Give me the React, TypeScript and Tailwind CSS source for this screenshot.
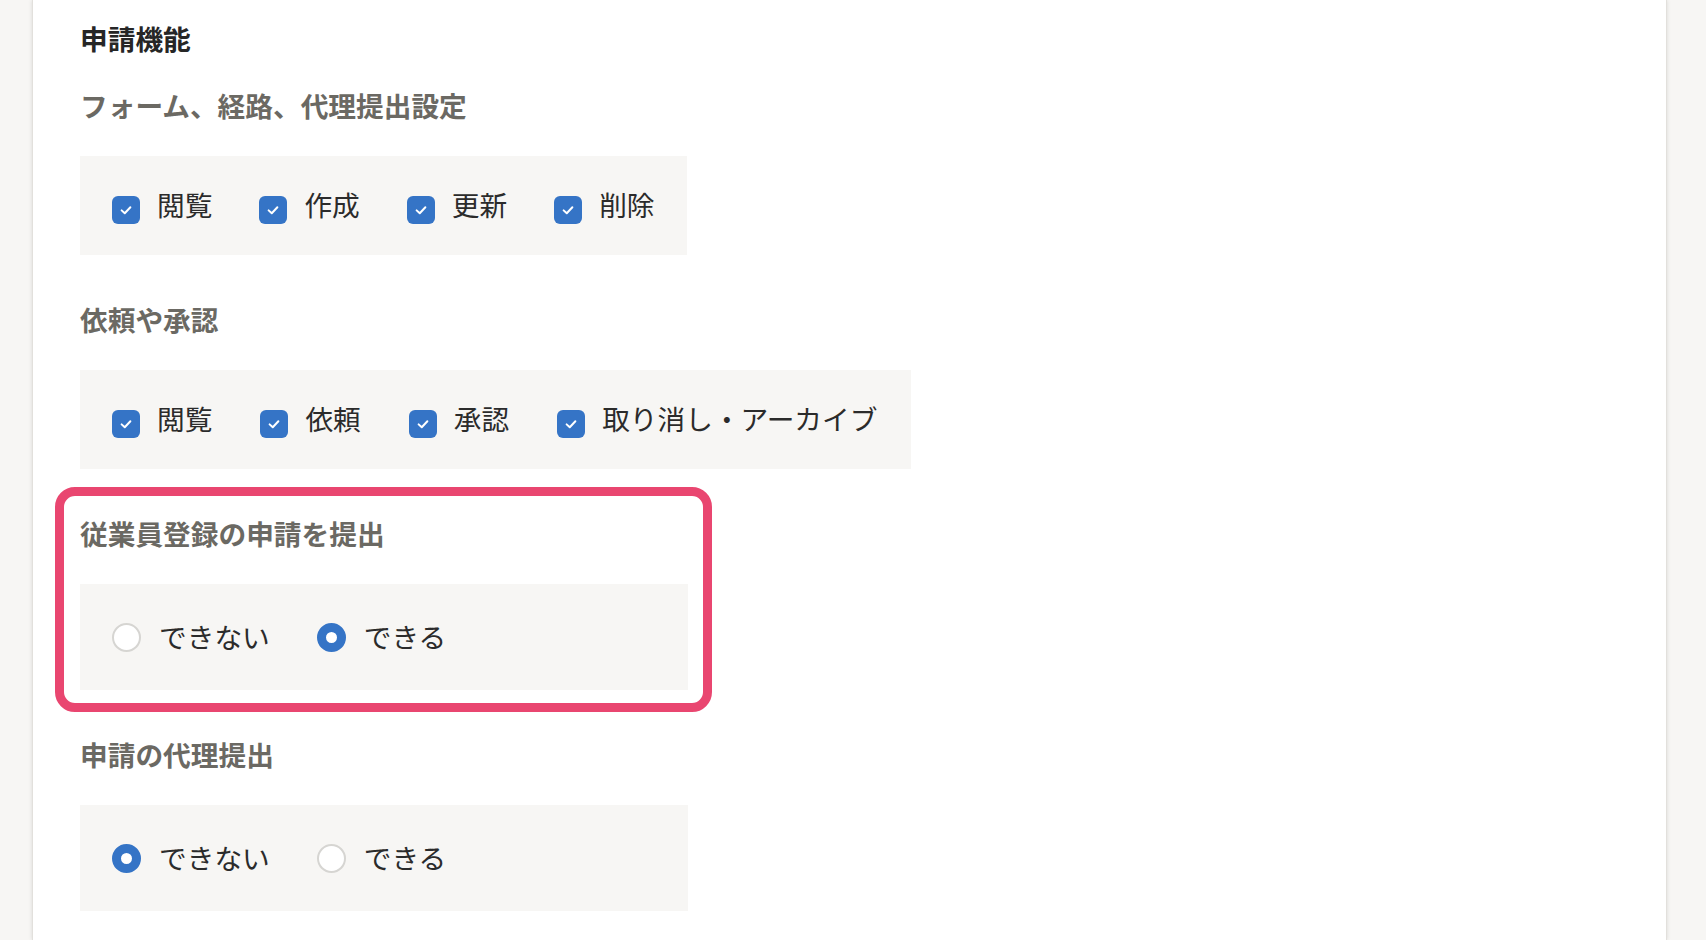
import React from 'react';

const FONT = { fontFamily: '"Noto Sans CJK JP", "Noto Sans", sans-serif' };

function CheckItem({ label }: { label: string }) {
  return (
    <label className="flex items-center gap-[17px]">
      <span className="mt-[12px] flex h-[28px] w-[28px] shrink-0 items-center justify-center rounded-[6px] bg-[#3574c6]">
        <svg viewBox="0 0 16 16" className="h-[20px] w-[20px]" fill="none" stroke="white" strokeWidth="1.6" strokeLinecap="round" strokeLinejoin="round">
          <polyline points="4.5,8.3 7,10.6 11.5,5.8" />
        </svg>
      </span>
      <span className="text-[27.7px] leading-[40px] text-[#2b2b2b]">{label}</span>
    </label>
  );
}

function RadioItem({ label, checked }: { label: string; checked?: boolean }) {
  return (
    <label className="flex items-center gap-[18px]">
      {checked ? (
        <span className="mt-[2px] h-[29px] w-[29px] shrink-0 rounded-full border-[9.5px] border-[#3574c6] bg-white" />
      ) : (
        <span className="mt-[2px] h-[29px] w-[29px] shrink-0 rounded-full border-2 border-[#d6d5d2] bg-white" />
      )}
      <span className="text-[27.7px] leading-[40px] text-[#2b2b2b]">{label}</span>
    </label>
  );
}

function SectionTitle({ children }: { children: React.ReactNode }) {
  return <h3 className="mb-[31px] text-[27.7px] font-bold leading-[40px] text-[#6b6963]">{children}</h3>;
}

export default function App() {
  return (
    <div className="min-h-screen bg-[#f7f6f4]" style={FONT}>
      <div className="ml-[32px] mr-[39px] min-h-screen border-x border-[#e2e0dc] bg-white pl-[47px] pt-[18px] shadow-[0_0_4px_rgba(0,0,0,0.12)]">
        <h2 className="mb-[27px] text-[27.7px] font-bold leading-[40px] text-[#262626]">申請機能</h2>

        <div className="flex flex-col gap-[44px]">
          <section>
            <SectionTitle>フォーム、経路、代理提出設定</SectionTitle>
            <div className="inline-flex h-[99px] min-w-[606px] items-center gap-[47px] bg-[#f7f6f4] px-[32px] pb-[3px]">
              <CheckItem label="閲覧" />
              <CheckItem label="作成" />
              <CheckItem label="更新" />
              <CheckItem label="削除" />
            </div>
          </section>

          <section>
            <SectionTitle>依頼や承認</SectionTitle>
            <div className="inline-flex h-[99px] min-w-[606px] items-center gap-[48px] bg-[#f7f6f4] pb-[3px] pl-[32px] pr-[34px]">
              <CheckItem label="閲覧" />
              <CheckItem label="依頼" />
              <CheckItem label="承認" />
              <CheckItem label="取り消し・アーカイブ" />
            </div>
          </section>

          <section className="relative w-fit">
            <SectionTitle>従業員登録の申請を提出</SectionTitle>
            <div className="flex h-[106px] min-w-[608px] items-center gap-[47px] bg-[#f7f6f4] px-[32px] pb-[2px]">
              <RadioItem label="できない" />
              <RadioItem label="できる" checked />
            </div>
            {/* highlight frame */}
            <div className="pointer-events-none absolute -bottom-[22px] -left-[25px] -right-[24px] -top-[26px] rounded-[20px] border-[9px] border-[#e94670]" />
          </section>

          <section>
            <SectionTitle>申請の代理提出</SectionTitle>
            <div className="flex h-[106px] w-[608px] items-center gap-[47px] bg-[#f7f6f4] px-[32px] pb-[2px]">
              <RadioItem label="できない" checked />
              <RadioItem label="できる" />
            </div>
          </section>
        </div>
      </div>
    </div>
  );
}
